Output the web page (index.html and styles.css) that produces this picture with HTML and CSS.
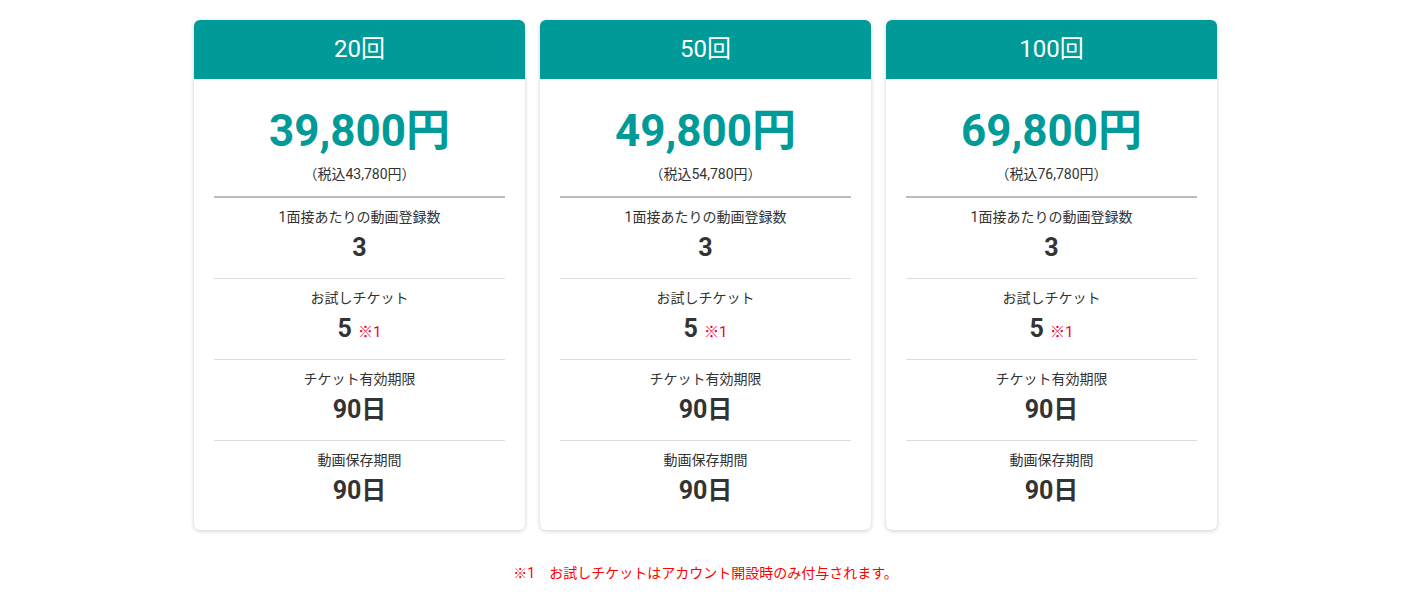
FILE: index.html
```html
<!DOCTYPE html>
<html lang="ja">
<head>
    <meta charset="UTF-8">
    <title>料金プラン</title>
    <link rel="stylesheet" href="styles.css">
</head>
<body>
<div class="plans">
    <div class="plan">
        <div class="plan-head">20回</div>
        <div class="plan-body">
            <div class="price">39,800円</div>
            <div class="tax">（税込43,780円）</div>
            <div class="row">
                <div class="label">1面接あたりの動画登録数</div>
                <div class="value">3</div>
            </div>
            <div class="row">
                <div class="label">お試しチケット</div>
                <div class="value">5 <span class="note">※1</span></div>
            </div>
            <div class="row">
                <div class="label">チケット有効期限</div>
                <div class="value">90日</div>
            </div>
            <div class="row">
                <div class="label">動画保存期間</div>
                <div class="value">90日</div>
            </div>
        </div>
    </div>
    <div class="plan">
        <div class="plan-head">50回</div>
        <div class="plan-body">
            <div class="price">49,800円</div>
            <div class="tax">（税込54,780円）</div>
            <div class="row">
                <div class="label">1面接あたりの動画登録数</div>
                <div class="value">3</div>
            </div>
            <div class="row">
                <div class="label">お試しチケット</div>
                <div class="value">5 <span class="note">※1</span></div>
            </div>
            <div class="row">
                <div class="label">チケット有効期限</div>
                <div class="value">90日</div>
            </div>
            <div class="row">
                <div class="label">動画保存期間</div>
                <div class="value">90日</div>
            </div>
        </div>
    </div>
    <div class="plan">
        <div class="plan-head">100回</div>
        <div class="plan-body">
            <div class="price">69,800円</div>
            <div class="tax">（税込76,780円）</div>
            <div class="row">
                <div class="label">1面接あたりの動画登録数</div>
                <div class="value">3</div>
            </div>
            <div class="row">
                <div class="label">お試しチケット</div>
                <div class="value">5 <span class="note">※1</span></div>
            </div>
            <div class="row">
                <div class="label">チケット有効期限</div>
                <div class="value">90日</div>
            </div>
            <div class="row">
                <div class="label">動画保存期間</div>
                <div class="value">90日</div>
            </div>
        </div>
    </div>
</div>
<p class="footnote">※1　お試しチケットはアカウント開設時のみ付与されます。</p>
</body>
</html>
```

FILE: styles.css
```css
* {
    margin: 0;
    padding: 0;
    box-sizing: border-box;
}

body {
    font-family: Roboto, "Noto Sans CJK JP", sans-serif;
    color: #333;
    background: #fff;
}

.plans {
    display: flex;
    justify-content: center;
    gap: 15px;
    padding-top: 20px;
}

.plan {
    width: 331px;
    background: #fff;
    border-radius: 6px;
    box-shadow: 0 1px 4px rgba(0, 0, 0, 0.2);
    overflow: hidden;
}

.plan-head {
    height: 59px;
    line-height: 59px;
    background: #009b98;
    color: #fff;
    font-size: 24px;
    text-align: center;
}

.plan-body {
    padding: 24px 20px 9px;
    text-align: center;
}

.price {
    font-size: 44px;
    font-weight: 700;
    line-height: 56px;
    color: #009b98;
}

.tax {
    font-size: 14px;
    line-height: 18px;
    margin-top: 6px;
    padding-bottom: 13px;
    border-bottom: 2px solid #bbb;
}

.row {
    padding: 10px 0;
    border-bottom: 1px solid #ddd;
}

.row:last-child {
    border-bottom: none;
}

.label {
    font-size: 14px;
    line-height: 18px;
}

.value {
    height: 40px;
    margin-top: 2px;
    font-size: 25px;
    font-weight: 700;
    line-height: 40px;
}

.note {
    font-size: 15px;
    font-weight: 400;
    line-height: 1;
    color: #f0002a;
}

.footnote {
    margin-top: 33px;
    text-align: center;
    font-size: 14px;
    line-height: 20px;
    color: #f00;
}
```
